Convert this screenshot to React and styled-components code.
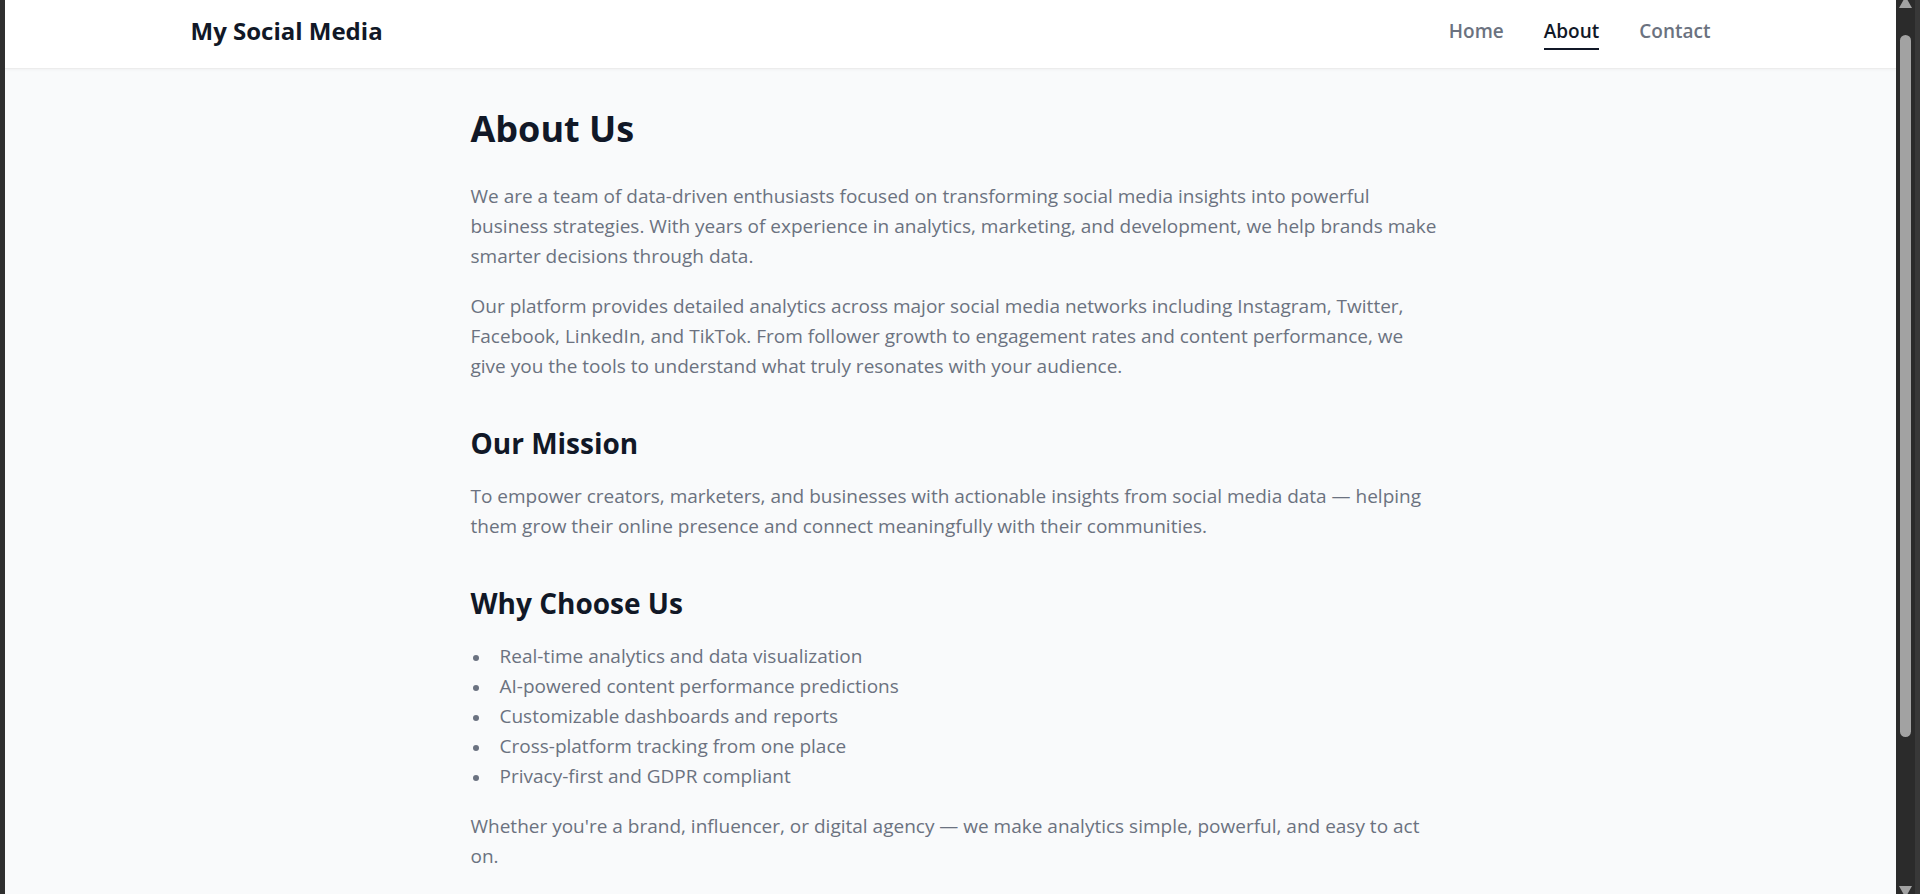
import React from "react";
import styled, { createGlobalStyle } from "styled-components";

const GlobalStyle = createGlobalStyle`
  html, body {
    margin: 0;
    height: 100%;
    overflow: hidden;
  }
  body {
    border-left: 5px solid #2f2f2f;
    font-family: "Open Sans", "Noto Sans", sans-serif;
    background: #f9fafb;
  }
  #root { height: 100%; }
  * { box-sizing: border-box; }
`;

const Frame = styled.div`
  display: flex;
  height: 100%;
`;

const Viewport = styled.div`
  flex: 1;
  min-width: 0;
  overflow: hidden;
  background: #f9fafb;
`;

/* browser scrollbar as seen in the shot */
const ScrollTrack = styled.div`
  width: 24px;
  flex-shrink: 0;
  background: #2b2b2b;
  border-right: 5px solid #383838;
  display: flex;
  flex-direction: column;
  align-items: flex-start;
  padding-left: 3px;
`;

const Thumb = styled.div`
  width: 11px;
  height: 702px;
  margin: 27px 0 0 1px;
  border-radius: 6px;
  background: #a2a2a2;
`;

const Spacer = styled.div`
  flex: 1;
`;

const Arrow = ({ down }) => (
  <svg width="13" height="8" viewBox="0 0 13 8" style={down ? { transform: "scaleY(-1)" } : undefined}>
    <polygon points="4.5,0 8.5,0 13,8 0,8" fill="#a2a2a2" />
  </svg>
);

const Page = styled.div`
  min-height: 1100px;
`;

const Header = styled.header`
  background: #ffffff;
  border-bottom: 1px solid #ececec;
  box-shadow: 0 1px 3px rgba(0, 0, 0, 0.04);
  height: 69px;
`;

const HeaderInner = styled.div`
  max-width: 1520px;
  margin: 0 auto;
  padding-top: 15px;
  display: flex;
  justify-content: space-between;
  align-items: flex-start;
`;

const Logo = styled.div`
  font-size: 24px;
  line-height: 32px;
  font-weight: 700;
  color: #111827;
`;

const Nav = styled.nav`
  display: flex;
  gap: 40px;
  margin-top: 4px;
`;

const NavLink = styled.a`
  font-size: 19px;
  line-height: 24px;
  font-weight: 600;
  padding-bottom: 5px;
  text-decoration: none;
  cursor: pointer;
  color: ${(p) => (p.$active ? "#111827" : "#6b7280")};
  border-bottom: 2px solid ${(p) => (p.$active ? "#111827" : "transparent")};
`;

const Main = styled.main`
  max-width: 972px;
  margin: 0 auto;
  padding: 40px 0 0 6px;
`;

const Title = styled.h1`
  margin: 0 0 32px;
  font-size: 36px;
  line-height: 40px;
  font-weight: 700;
  color: #111827;
`;

const SectionTitle = styled.h2`
  margin: 44px 0 20px;
  font-size: 28px;
  line-height: 36px;
  font-weight: 700;
  color: #111827;
`;

const Text = styled.p`
  margin: 0 0 20px;
  font-size: 19px;
  line-height: 30px;
  color: #6b7280;
`;

const List = styled.ul`
  list-style: none;
  margin: 0 0 20px;
  padding: 0;
`;

const Item = styled.li`
  position: relative;
  padding-left: 29px;
  font-size: 19px;
  line-height: 30px;
  color: #6b7280;

  &::before {
    content: "";
    position: absolute;
    left: 2px;
    top: 14px;
    width: 6px;
    height: 6px;
    border-radius: 50%;
    background: #6b7280;
  }
`;

const features = [
  "Real-time analytics and data visualization",
  "AI-powered content performance predictions",
  "Customizable dashboards and reports",
  "Cross-platform tracking from one place",
  "Privacy-first and GDPR compliant",
];

const App = () => (
  <>
    <GlobalStyle />
    <Frame>
      <Viewport>
        <Page>
          <Header>
            <HeaderInner>
              <Logo>My Social Media</Logo>
              <Nav>
                <NavLink>Home</NavLink>
                <NavLink $active>About</NavLink>
                <NavLink>Contact</NavLink>
              </Nav>
            </HeaderInner>
          </Header>
          <Main>
            <Title>About Us</Title>
            <Text>
              We are a team of data-driven enthusiasts focused on transforming social media insights into
              powerful business strategies. With years of experience in analytics, marketing, and
              development, we help brands make smarter decisions through data.
            </Text>
            <Text>
              Our platform provides detailed analytics across major social media networks including
              Instagram, Twitter, Facebook, LinkedIn, and TikTok. From follower growth to engagement rates
              and content performance, we give you the tools to understand what truly resonates with your
              audience.
            </Text>

            <SectionTitle>Our Mission</SectionTitle>
            <Text>
              To empower creators, marketers, and businesses with actionable insights from social media
              data — helping them grow their online presence and connect meaningfully with their
              communities.
            </Text>

            <SectionTitle>Why Choose Us</SectionTitle>
            <List>
              {features.map((f) => (
                <Item key={f}>{f}</Item>
              ))}
            </List>
            <Text>
              Whether you're a brand, influencer, or digital agency — we make analytics simple, powerful,
              and easy to act on.
            </Text>
          </Main>
        </Page>
      </Viewport>
      <ScrollTrack>
        <Arrow />
        <Thumb />
        <Spacer />
        <Arrow down />
      </ScrollTrack>
    </Frame>
  </>
);

export default App;
